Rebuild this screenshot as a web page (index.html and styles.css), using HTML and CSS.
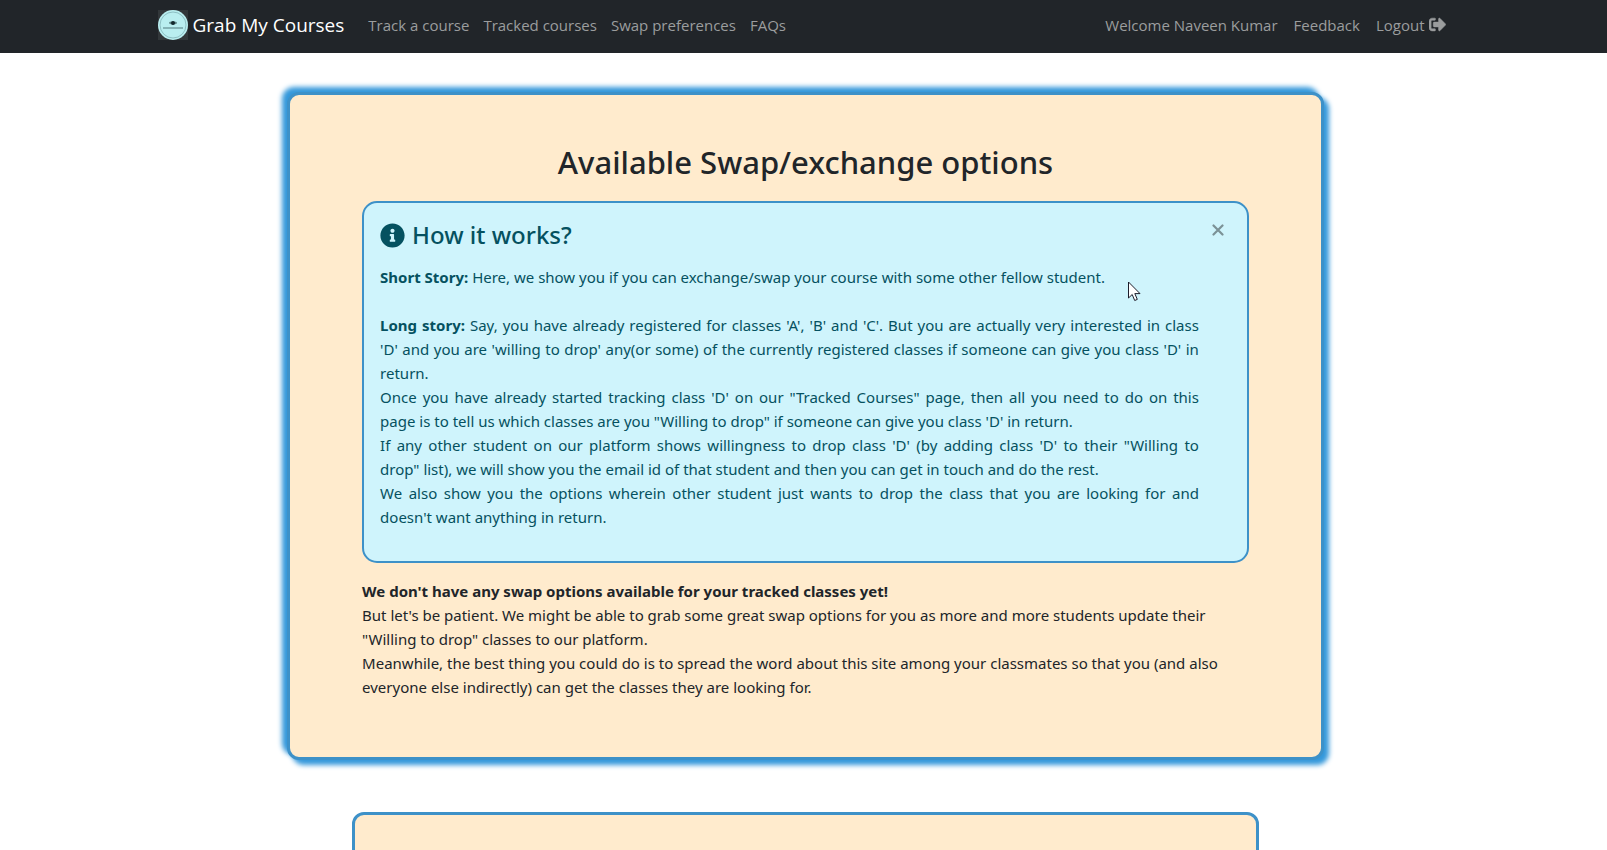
FILE: index.html
```html
<!DOCTYPE html>
<html lang="en">
<head>
<meta charset="utf-8">
<title>Grab My Courses</title>
<link rel="stylesheet" href="styles.css">
</head>
<body>
<header class="navbar">
  <nav class="container nav-row">
    <a class="brand" href="#">
      <svg class="logo" viewBox="0 0 30 30" aria-hidden="true">
        <rect width="30" height="30" fill="#32373a"/>
        <circle cx="15" cy="15" r="15" fill="#b9eef0"/>
        <circle cx="15" cy="15" r="13" fill="none" stroke="#8dbfc3" stroke-width="1"/>
        <ellipse cx="15" cy="13" rx="4" ry="1.4" fill="#5d8587"/>
        <circle cx="15" cy="13" r="2" fill="#12282c"/>
        <path d="M5 18h20" stroke="#78a5a9" stroke-width="1.6"/>
      </svg>
      <span>Grab My Courses</span>
    </a>
    <ul class="links">
      <li><a href="#">Track a course</a></li>
      <li><a href="#">Tracked courses</a></li>
      <li><a href="#">Swap preferences</a></li>
      <li><a href="#">FAQs</a></li>
    </ul>
    <ul class="links links-end">
      <li><a href="#">Welcome Naveen Kumar</a></li>
      <li><a href="#">Feedback</a></li>
      <li><a class="logout" href="#">Logout
        <svg width="17" height="17" viewBox="0 0 512 512" aria-hidden="true"><path fill="currentColor" stroke="currentColor" stroke-width="16" d="M497 273L329 441c-15 15-41 4.500-41-17v-96H152c-13.300 0-24-10.700-24-24v-96c0-13.300 10.700-24 24-24h136V88c0-21.400 25.900-32 41-17l168 168c9.300 9.400 9.300 24.600 0 34zM192 436v-40c0-6.600-5.400-12-12-12H96c-17.700 0-32-14.300-32-32V160c0-17.700 14.300-32 32-32h84c6.600 0 12-5.400 12-12V76c0-6.600-5.400-12-12-12H96c-53 0-96 43-96 96v192c0 53 43 96 96 96h84c6.600 0 12-5.400 12-12z"/></svg></a></li>
    </ul>
  </nav>
</header>
<main class="page">
  <div class="container">
    <section class="card card-glow">
      <h1>Available Swap/exchange options</h1>
      <div class="alert">
        <button class="close" type="button" aria-label="Close">
          <svg width="12" height="12" viewBox="0 0 12 12" aria-hidden="true"><path d="M1.500 1.500l9 9M10.500 1.500l-9 9" stroke="currentColor" stroke-width="2.200" stroke-linecap="round"/></svg>
        </button>
        <h2>
          <svg width="25" height="25" viewBox="0 0 512 512" aria-hidden="true"><path fill="currentColor" d="M256 8C119 8 8 119.100 8 256c0 137 111 248 248 248s248-111 248-248C504 119.100 393 8 256 8zm0 110c23.200 0 42 18.800 42 42s-18.800 42-42 42-42-18.800-42-42 18.800-42 42-42zm56 254c0 6.600-5.400 12-12 12h-88c-6.600 0-12-5.400-12-12v-24c0-6.600 5.400-12 12-12h12v-64h-12c-6.600 0-12-5.400-12-12v-24c0-6.600 5.400-12 12-12h64c6.600 0 12 5.400 12 12v100h12c6.600 0 12 5.400 12 12v24z"/></svg>
          How it works?
        </h2>
        <p class="short"><strong>Short Story:</strong> Here, we show you if you can exchange/swap your course with some other fellow student.</p>
        <p><strong>Long story:</strong> Say, you have already registered for classes 'A', 'B' and 'C'. But you are actually very interested in class 'D'&nbsp;and you are 'willing to drop' any(or some) of the currently registered classes if someone can give you class 'D' in return.</p>
        <p>Once you have already started tracking class 'D' on our "Tracked Courses" page, then all you need to do on this page&nbsp;is to tell us which classes are you "Willing to drop" if someone can give you class 'D' in return.</p>
        <p>If any other student on our platform shows willingness to drop class 'D' (by adding class 'D' to their "Willing to drop"&nbsp;list), we will show you the email id of that student and then you can get in touch and do the rest.</p>
        <p>We also show you the options wherein other student just wants to drop the class that you are looking for and doesn't want anything in return.</p>
        <svg class="cursor" width="13" height="21" viewBox="0 0 13 21" aria-hidden="true"><path d="M.5 1v16l3.700-3.500 2.500 6 2.600-1.100-2.500-5.800h5.200z" fill="#fff" stroke="#1d1d2b"/></svg>
      </div>
      <p><strong>We don't have any swap options available for your tracked classes yet!</strong></p>
      <p>But let's be patient. We might be able to grab some great swap options for you as more and more students update their "Willing to drop" classes to our platform.</p>
      <p>Meanwhile, the best thing you could do is to spread the word about this site among your classmates so that you (and also everyone else indirectly) can get the classes they are looking for.</p>
    </section>
    <section class="card card-next"></section>
  </div>
</main>
</body>
</html>
```

FILE: styles.css
```css
* { box-sizing: border-box; }
html { overflow: hidden; }
body {
  margin: 0;
  font-family: "Open Sans", "Noto Sans", sans-serif;
  font-size: 15px;
  line-height: 24px;
  color: #212529;
  background: #fff;
}
.navbar { background: #212529; padding-left: 4px; }
.page { padding: 39px 0 0 4px; }
.container { width: 100%; max-width: 1296px; margin: 0 auto; }
.nav-row { display: flex; align-items: center; min-height: 53px; padding: 0 8px 4px 0; }
.brand { display: flex; align-items: center; gap: 5px; margin-right: 24px; color: #fff; font-size: 19px; text-decoration: none; white-space: nowrap; }
.logo { width: 30px; height: 30px; }
.links { display: flex; gap: 14px; list-style: none; margin: 0; padding: 0; white-space: nowrap; }
.links a { color: #9b9d9e; text-decoration: none; }
.links-end { gap: 16px; margin-left: auto; }
.links .logout { display: flex; align-items: center; gap: 4px; }
.card { margin: 0 auto; background: #ffebcd; border: 3px solid #3d91c8; border-radius: 12px; }
.card-glow {
  width: 80%;
  padding: 48px 72px 58px;
  box-shadow: 5px 5px 5px #3498db, -5px -5px 5px #3498db;
}
h1, h2, p { font-family: "Noto Sans", "Open Sans", sans-serif; font-weight: 500; }
h1 { margin: 0 0 20px; font-size: 31px; line-height: 38px; text-align: center; }
p { margin: 0; font-size: 15px; font-weight: 400; }
strong { font-weight: 700; }
.alert {
  position: relative;
  margin-bottom: 16px;
  padding: 16px 48px 32px 16px;
  color: #055160;
  background: #cff4fc;
  border: 2px solid #3d91c8;
  border-radius: 15px;
  text-align: justify;
}
.alert h2 { display: flex; align-items: center; gap: 7px; margin: 0 0 14px; font-size: 24px; line-height: 32px; }
.short { margin-bottom: 24px; }
.close { position: absolute; top: 15px; right: 17px; width: 24px; height: 24px; padding: 0; border: 0; background: none; color: #000; opacity: .4; display: grid; place-items: center; }
.cursor { position: absolute; top: 78px; right: 106px; }
.card-next { width: 70%; margin-top: 52px; min-height: 60px; }
```
